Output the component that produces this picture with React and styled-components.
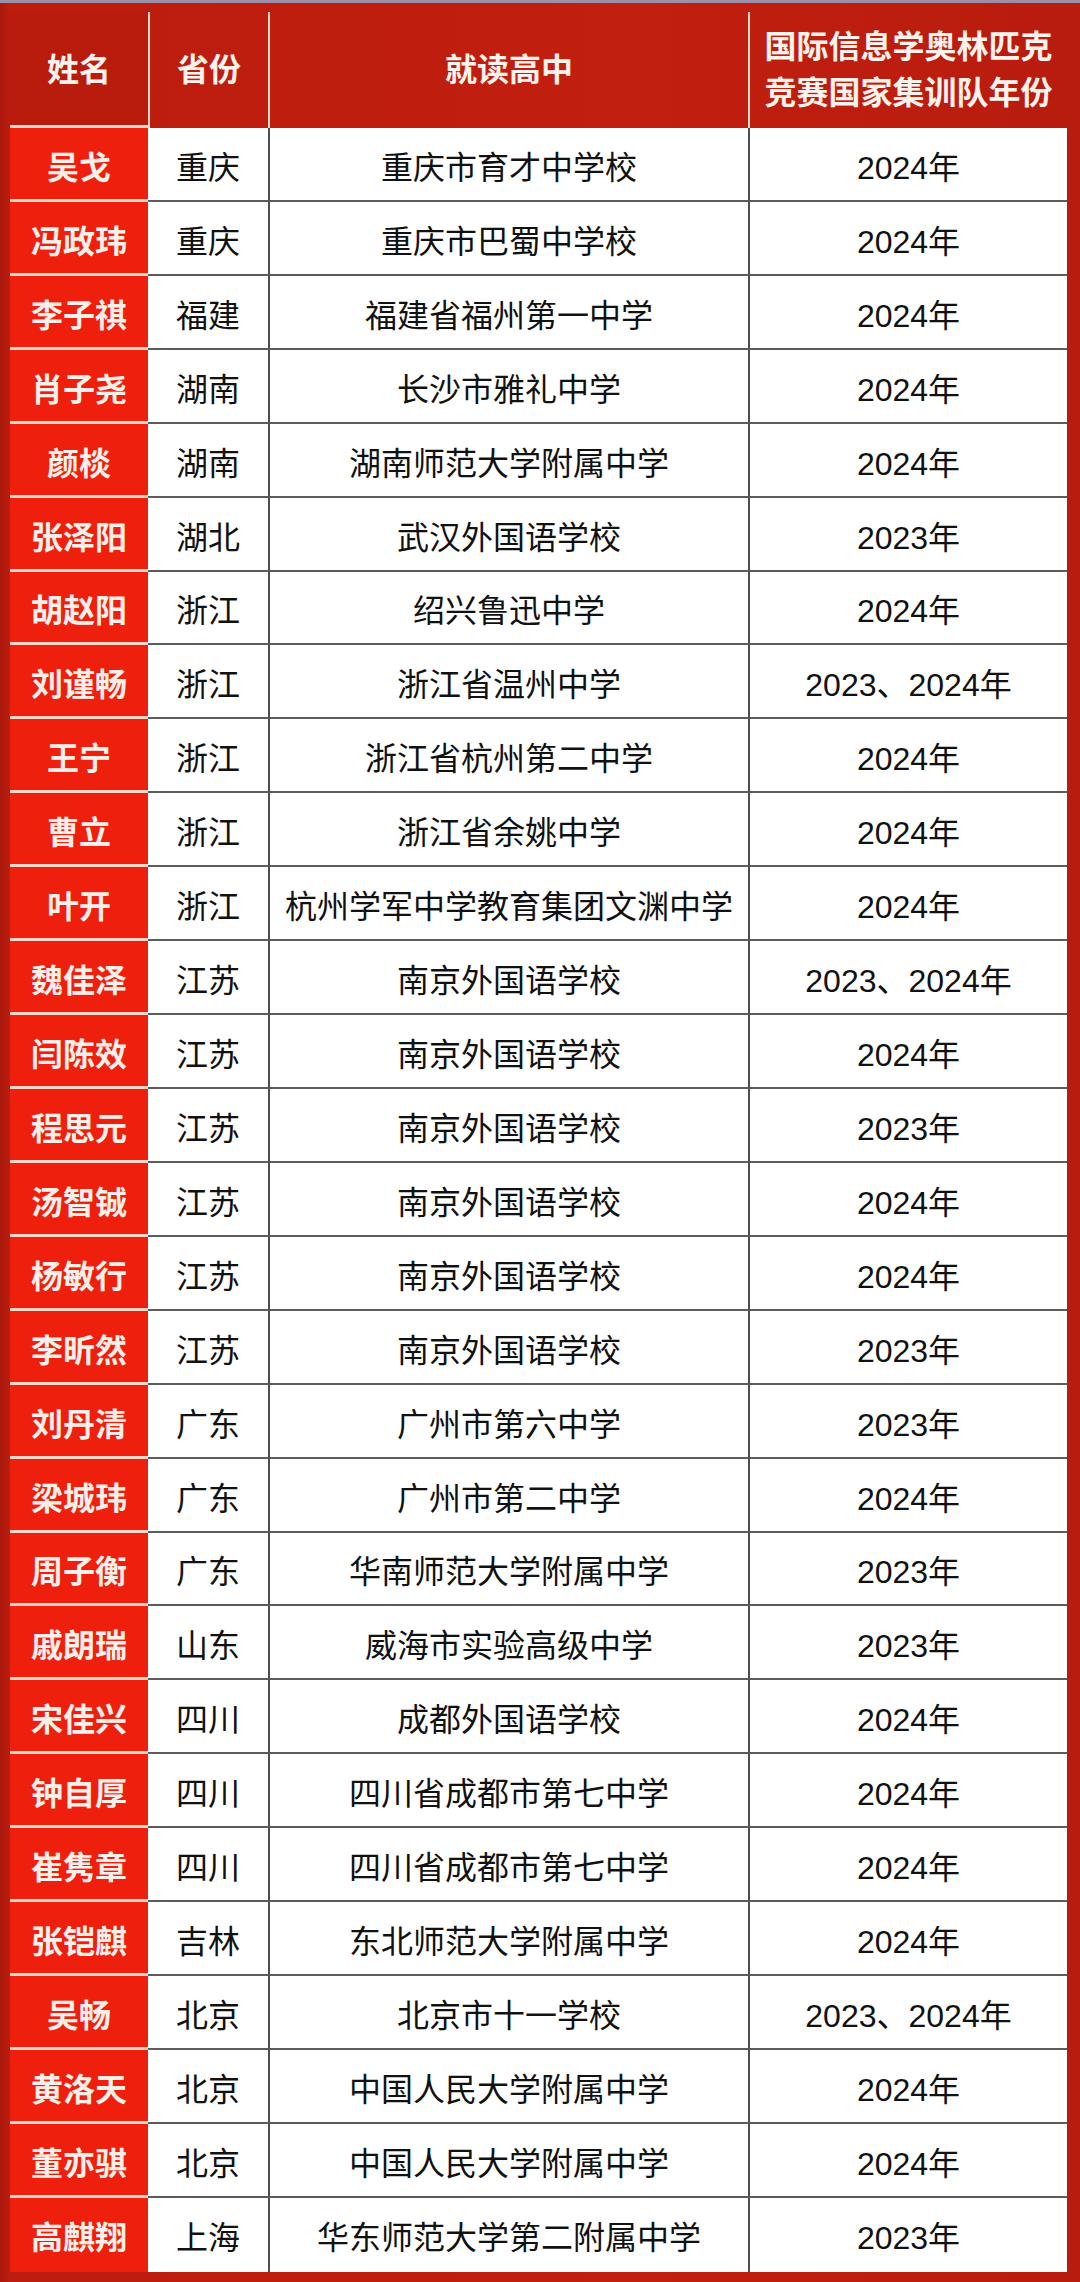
import React from "react";
import styled, { createGlobalStyle } from "styled-components";

const Global = createGlobalStyle`
  html, body { margin: 0; padding: 0; background: #b81c0e; }
  body { font-family: "Liberation Sans", "Noto Sans CJK SC", sans-serif; }
`;

const rows = [
  ["吴戈", "重庆", "重庆市育才中学校", "2024年"],
  ["冯政玮", "重庆", "重庆市巴蜀中学校", "2024年"],
  ["李子祺", "福建", "福建省福州第一中学", "2024年"],
  ["肖子尧", "湖南", "长沙市雅礼中学", "2024年"],
  ["颜棪", "湖南", "湖南师范大学附属中学", "2024年"],
  ["张泽阳", "湖北", "武汉外国语学校", "2023年"],
  ["胡赵阳", "浙江", "绍兴鲁迅中学", "2024年"],
  ["刘谨畅", "浙江", "浙江省温州中学", "2023、2024年"],
  ["王宁", "浙江", "浙江省杭州第二中学", "2024年"],
  ["曹立", "浙江", "浙江省余姚中学", "2024年"],
  ["叶开", "浙江", "杭州学军中学教育集团文渊中学", "2024年"],
  ["魏佳泽", "江苏", "南京外国语学校", "2023、2024年"],
  ["闫陈效", "江苏", "南京外国语学校", "2024年"],
  ["程思元", "江苏", "南京外国语学校", "2023年"],
  ["汤智铖", "江苏", "南京外国语学校", "2024年"],
  ["杨敏行", "江苏", "南京外国语学校", "2024年"],
  ["李昕然", "江苏", "南京外国语学校", "2023年"],
  ["刘丹清", "广东", "广州市第六中学", "2023年"],
  ["梁城玮", "广东", "广州市第二中学", "2024年"],
  ["周子衡", "广东", "华南师范大学附属中学", "2023年"],
  ["戚朗瑞", "山东", "威海市实验高级中学", "2023年"],
  ["宋佳兴", "四川", "成都外国语学校", "2024年"],
  ["钟自厚", "四川", "四川省成都市第七中学", "2024年"],
  ["崔隽章", "四川", "四川省成都市第七中学", "2024年"],
  ["张铠麒", "吉林", "东北师范大学附属中学", "2024年"],
  ["吴畅", "北京", "北京市十一学校", "2023、2024年"],
  ["黄洛天", "北京", "中国人民大学附属中学", "2024年"],
  ["董亦骐", "北京", "中国人民大学附属中学", "2024年"],
  ["高麒翔", "上海", "华东师范大学第二附属中学", "2023年"],
];

const Page = styled.div`
  width: 1080px;
  height: 2282px;
  box-sizing: border-box;
  border-top: 3px solid #9e8fa6;
  background: linear-gradient(90deg, #a9180c 0px, #bc1d0e 10px, #c11f0f 60%, #b81c0e 100%);
  padding: 0 13px 10px 10px;
  overflow: hidden;
`;

const Table = styled.div`
  display: grid;
  grid-template-columns: 138px 120px 480px 319px;
  grid-template-rows: 9px 116px;
  grid-auto-rows: 73.93px;
`;

const Spacer = styled.div`
  grid-column: 1 / -1;
`;

const HeadCell = styled.div`
  display: flex;
  align-items: center;
  justify-content: center;
  flex-direction: column;
  box-sizing: border-box;
  color: #fdf2ec;
  font-weight: 700;
  font-size: 32px;
  line-height: 46px;
  text-align: center;
  letter-spacing: 0;
  border-left: ${(p) => (p.$first ? "none" : "2px solid #f3d8cb")};
  border-bottom: ${(p) => (p.$first ? "3px solid #f3d8cb" : "none")};
  padding-top: ${(p) => (p.$first ? "3px" : "0")};
  background: ${(p) => (p.$first ? "#b91b0d" : "transparent")};
`;

const NameCell = styled.div`
  display: flex;
  align-items: center;
  justify-content: center;
  box-sizing: border-box;
  background: #ee1f0c;
  color: #fcefe9;
  font-weight: 700;
  font-size: 32px;
  border-bottom: ${(p) => (p.$last ? "none" : "3px solid #f6d6c8")};
  padding-top: ${(p) => (p.$last ? "0" : "3px")};
`;

const Cell = styled.div`
  display: flex;
  align-items: center;
  justify-content: center;
  box-sizing: border-box;
  background: #fff;
  color: #111;
  font-size: 32px;
  white-space: nowrap;
  border-left: ${(p) => (p.$divider ? "2px solid #4d4d4d" : "none")};
  border-bottom: ${(p) => (p.$last ? "none" : "2px solid #5c5c5c")};
  padding-top: ${(p) => (p.$last ? "0" : "2px")};
`;

export default function App() {
  return (
    <Page>
      <Global />
      <Table>
        <Spacer />
        <HeadCell $first>姓名</HeadCell>
        <HeadCell>省份</HeadCell>
        <HeadCell>就读高中</HeadCell>
        <HeadCell>
          <span>国际信息学奥林匹克</span>
          <span>竞赛国家集训队年份</span>
        </HeadCell>
        {rows.map((r, i) => {
          const last = i === rows.length - 1;
          return (
            <React.Fragment key={i}>
              <NameCell $last={last}>{r[0]}</NameCell>
              <Cell $last={last}>{r[1]}</Cell>
              <Cell $last={last} $divider>{r[2]}</Cell>
              <Cell $last={last} $divider>{r[3]}</Cell>
            </React.Fragment>
          );
        })}
      </Table>
    </Page>
  );
}
